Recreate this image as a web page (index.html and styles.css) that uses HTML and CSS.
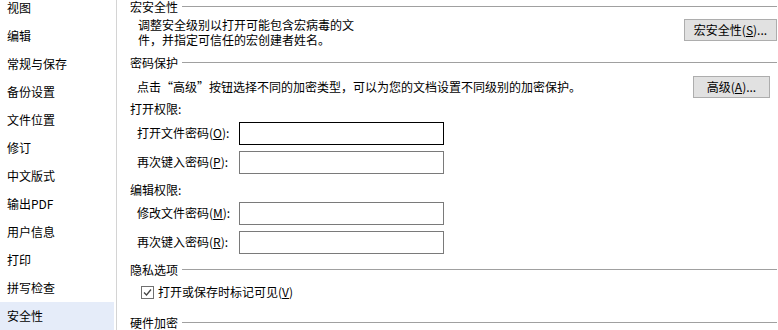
FILE: index.html
```html
<!DOCTYPE html>
<html lang="zh-CN">
<head>
<meta charset="utf-8">
<title>选项 - 安全性</title>
<link rel="stylesheet" href="styles.css">
</head>
<body>
<div class="window">
  <nav class="sidebar">
    <ul class="nav-list">
      <li class="nav-item">视图</li>
      <li class="nav-item">编辑</li>
      <li class="nav-item">常规与保存</li>
      <li class="nav-item">备份设置</li>
      <li class="nav-item">文件位置</li>
      <li class="nav-item">修订</li>
      <li class="nav-item">中文版式</li>
      <li class="nav-item">输出PDF</li>
      <li class="nav-item">用户信息</li>
      <li class="nav-item">打印</li>
      <li class="nav-item">拼写检查</li>
      <li class="nav-item is-active">安全性</li>
    </ul>
  </nav>
  <main class="panel">
    <div class="group-title first">宏安全性</div>
    <div class="macro-row">
      <p class="desc">调整安全级别以打开可能包含宏病毒的文<br>件，并指定可信任的宏创建者姓名。</p>
      <button class="btn btn-macro">宏安全性(<u>S</u>)...</button>
    </div>

    <div class="group-title pw-title">密码保护</div>
    <div class="adv-row">
      <p class="desc">点击“高级”按钮选择不同的加密类型，可以为您的文档设置不同级别的加密保护。</p>
      <button class="btn btn-adv">高级(<u>A</u>)...</button>
    </div>

    <div class="sub-title open-title">打开权限:</div>
    <div class="field-row first-field">
      <label class="field-label">打开文件密码(<u>O</u>):</label>
      <input class="field-input is-focused" type="password">
    </div>
    <div class="field-row">
      <label class="field-label">再次键入密码(<u>P</u>):</label>
      <input class="field-input" type="password">
    </div>

    <div class="sub-title edit-title">编辑权限:</div>
    <div class="field-row first-field">
      <label class="field-label">修改文件密码(<u>M</u>):</label>
      <input class="field-input" type="password">
    </div>
    <div class="field-row">
      <label class="field-label">再次键入密码(<u>R</u>):</label>
      <input class="field-input" type="password">
    </div>

    <div class="group-title privacy-title">隐私选项</div>
    <div class="check-row">
      <span class="checkbox"><svg width="11" height="11" viewBox="0 0 11 11"><polyline points="2,5.5 4.5,8 9,2.5" fill="none" stroke="#444" stroke-width="1.3"/></svg></span>
      <span class="check-label">打开或保存时标记可见(<u>V</u>)</span>
    </div>

    <div class="group-title hw-title">硬件加密</div>
  </main>
</div>
</body>
</html>
```

FILE: styles.css
```css
* { box-sizing: border-box; }
html, body {
  margin: 0;
  padding: 0;
  background: #ffffff;
  overflow: hidden;
}
body {
  font-family: "Noto Sans CJK SC", "Liberation Sans", sans-serif;
  font-size: 12px;
  color: #000;
}
.window {
  display: flex;
  width: 778px;
  height: 330px;
  overflow: hidden;
}
.sidebar {
  width: 117px;
  flex: none;
  border-right: 1px solid #d4d4d4;
  overflow: hidden;
}
.nav-list {
  list-style: none;
  margin: -6px 0 0 0;
  padding: 0 2px 0 0;
}
.nav-item {
  height: 28px;
  line-height: 28px;
  padding-left: 7px;
}
.nav-item.is-active {
  background: #e5ecf9;
}
.panel {
  flex: 1;
  padding: 0 1px 0 13px;
}
.group-title {
  display: flex;
  align-items: center;
  gap: 4px;
  height: 14px;
  line-height: 14px;
}
.group-title::after {
  content: "";
  flex: 1;
  border-top: 1px solid #a0a0a0;
  margin-top: -1px;
}
.sub-title {
  height: 14px;
  line-height: 14px;
}
.desc {
  margin: 0;
  padding-left: 8px;
  line-height: 15px;
}
.btn {
  flex: none;
  height: 22px;
  padding: 0;
  background: #e1e1e1;
  border: 1px solid #adadad;
  font: inherit;
  color: #000;
  line-height: 18px;
}
.macro-row {
  display: flex;
  justify-content: space-between;
  align-items: flex-start;
  margin-top: 3px;
}
.btn-macro {
  width: 93px;
  margin-top: 2px;
  margin-right: 0;
}
.pw-title { margin-top: 9px; }
.adv-row {
  display: flex;
  justify-content: space-between;
  align-items: center;
  margin-top: 6px;
  height: 22px;
}
.adv-row .desc { padding-left: 7px; margin-top: -2px; }
.btn-adv {
  width: 77px;
  margin-right: 7px;
}
.open-title { margin-top: 4px; }
.edit-title { margin-top: 9px; }
.field-row {
  display: flex;
  align-items: center;
  margin-top: 6px;
  height: 23px;
}
.first-field { margin-top: 6px; }
.edit-title + .first-field { margin-top: 5px; }
.field-label {
  width: 109px;
  padding-left: 7px;
  flex: none;
  margin-top: -2px;
}
.field-input {
  width: 205px;
  height: 23px;
  border: 1px solid #7a7a7a;
  padding: 0;
  margin: 0;
  background: #fff;
  outline: none;
}
.field-input.is-focused {
  border-color: #000;
}
.privacy-title { margin-top: 9px; }
.check-row {
  display: flex;
  align-items: center;
  margin-top: 8px;
  height: 14px;
  padding-left: 11px;
}
.checkbox {
  width: 13px;
  height: 13px;
  border: 1px solid #707070;
  display: flex;
  align-items: center;
  justify-content: center;
  flex: none;
}
.check-label {
  margin-left: 4px;
  line-height: 14px;
}
.hw-title { margin-top: 17px; }
```
